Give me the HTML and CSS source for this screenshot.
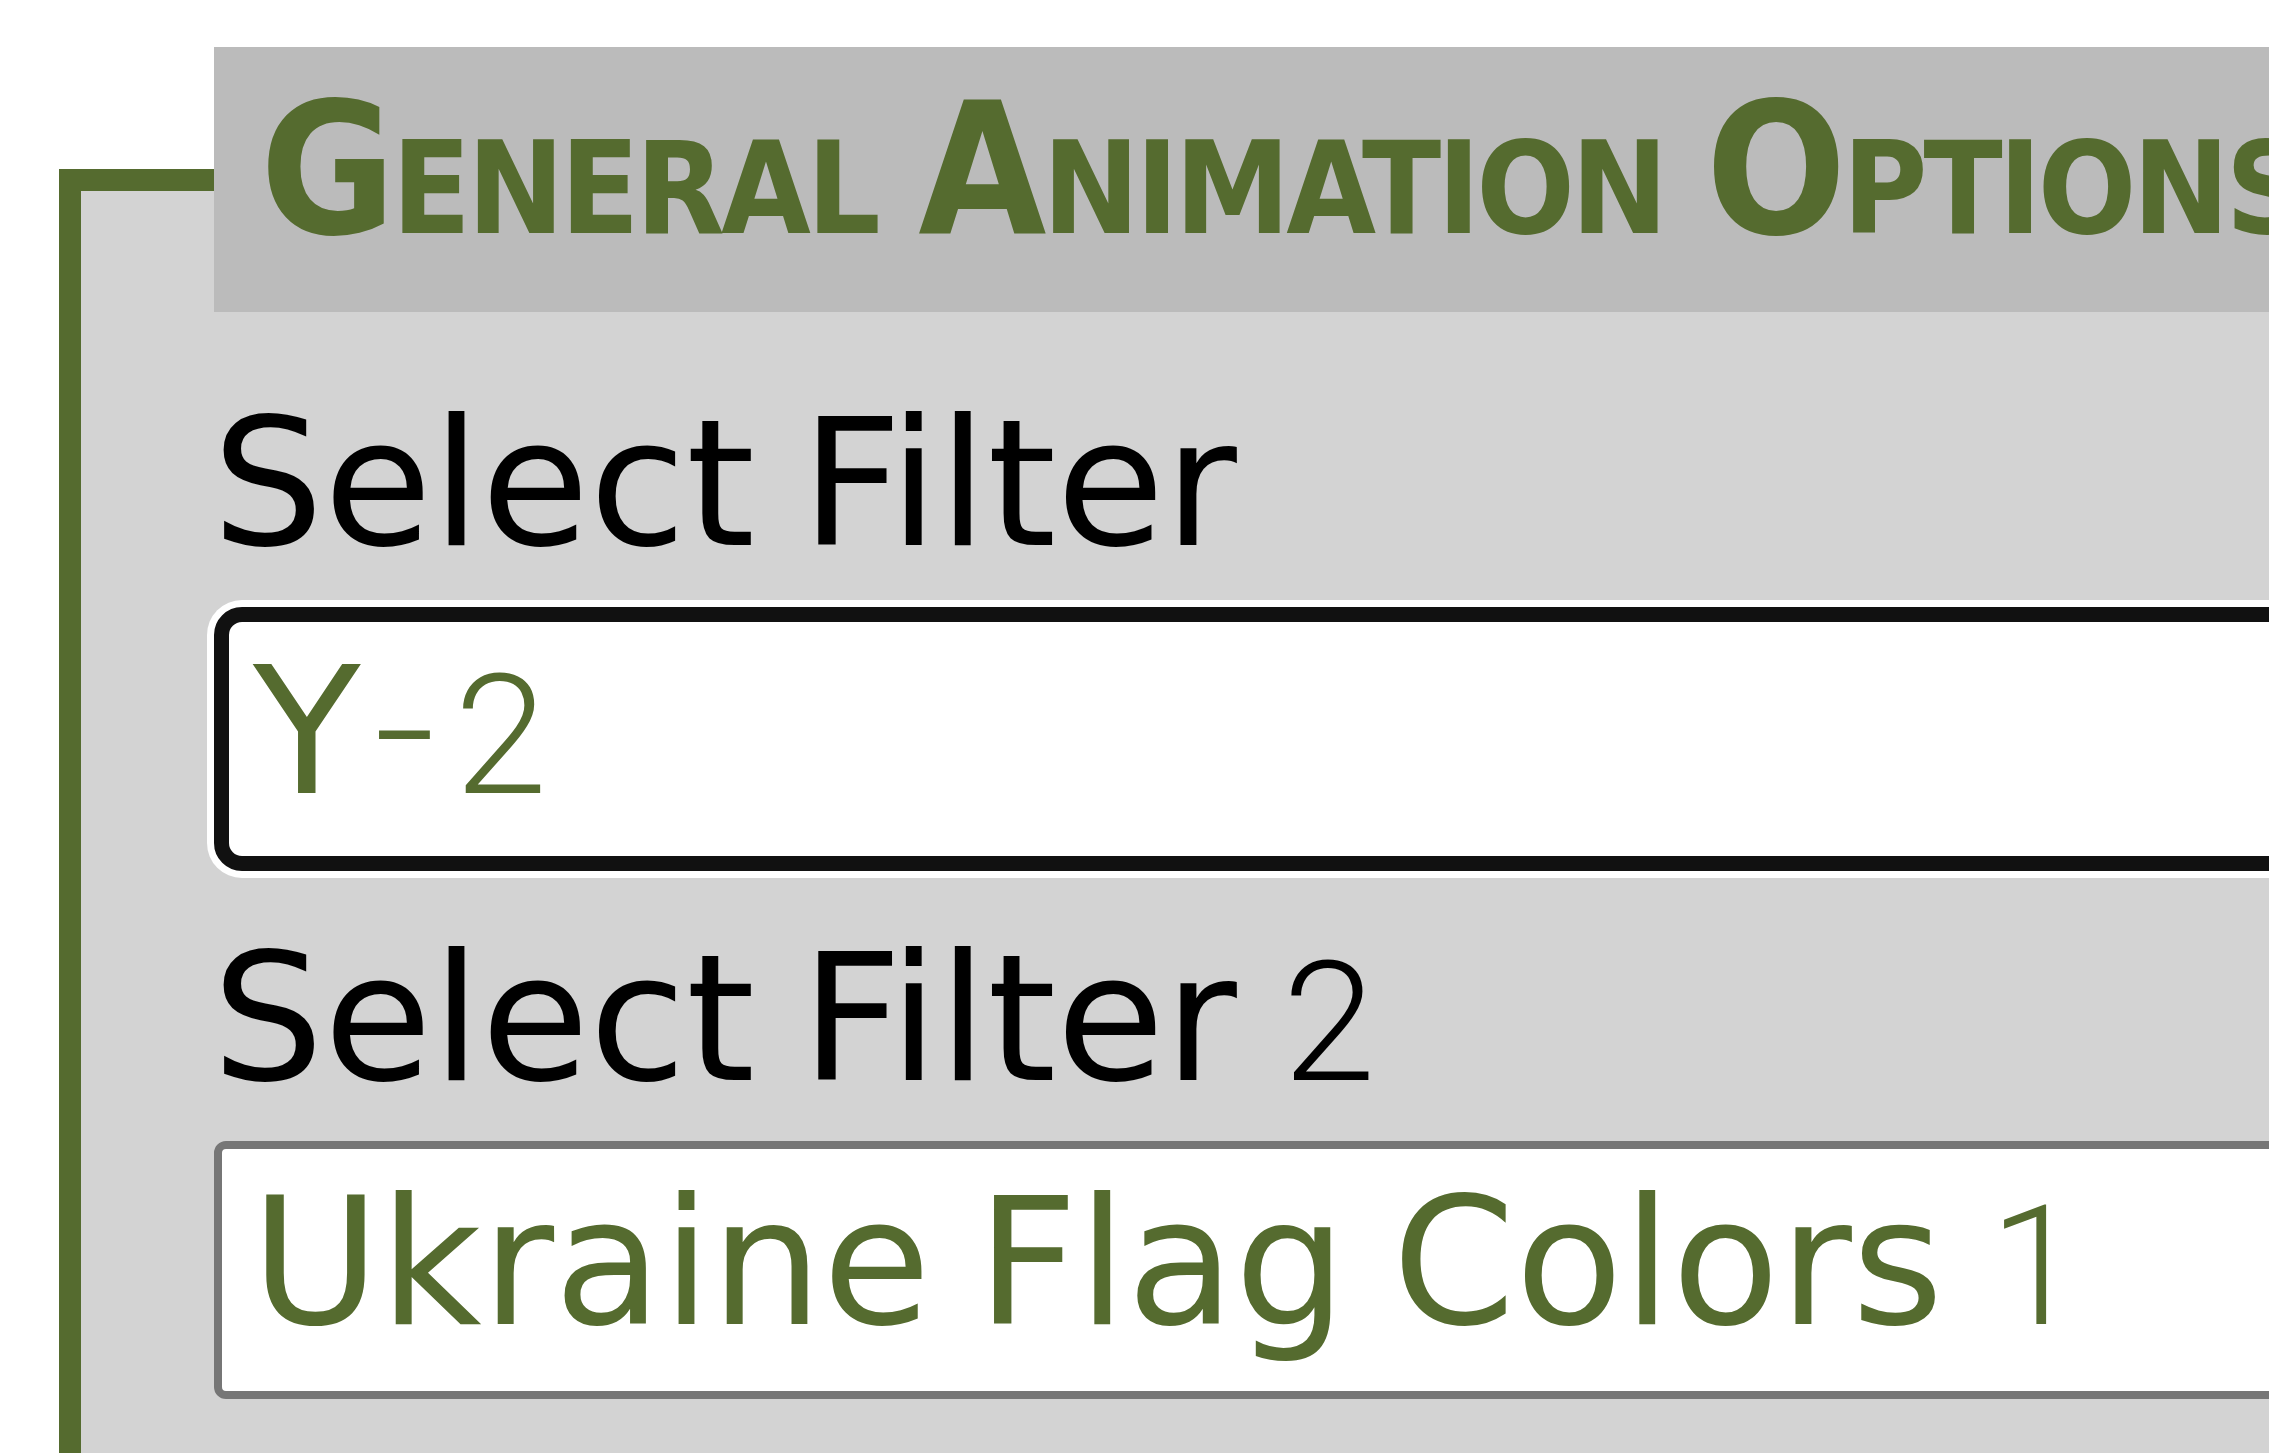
FILE: index.html
```html
<!DOCTYPE html>
<html lang="en">
<head>
<meta charset="utf-8">
<title>General Animation Options</title>
<link rel="stylesheet" href="styles.css">
</head>
<body>
<fieldset class="panel">
  <legend class="panel-title">General Animation Options</legend>
  <div class="field field-first">
    <label class="field-label">Select Filter</label>
    <div class="select select-focused">Y<span class="num num-dash">-</span><span class="num">2</span></div>
  </div>
  <div class="field field-second">
    <label class="field-label">Select Filter <span class="num">2</span></label>
    <div class="select select-plain">Ukraine Flag Colors <span class="num">1</span></div>
  </div>
</fieldset>
</body>
</html>
```

FILE: styles.css
```css
html, body {
  margin: 0;
  padding: 0;
  background: #ffffff;
  overflow: hidden;
}

body {
  font-family: "DejaVu Sans", "Liberation Sans", sans-serif;
}

.panel {
  box-sizing: border-box;
  width: 2700px;
  margin: 47px 0 0 59px;
  padding: 70px 0 300px 133px;
  border: 22px solid #556b2f;
  background: #d3d3d3;
  min-width: 0;
}

.panel-title {
  margin: 0;
  padding: 15px 46px 36px 46px;
  background: #bbbbbb;
  color: #556b2f;
  font-family: "DejaVu Sans Condensed", "DejaVu Sans", sans-serif;
  font-stretch: condensed;
  font-weight: bold;
  font-size: 184px;
  font-variant: small-caps;
  line-height: normal;
  letter-spacing: -4px;
  word-spacing: -12px;
  white-space: nowrap;
}

.field-label {
  display: block;
  margin-left: -2px;
  font-size: 176px;
  line-height: normal;
  word-spacing: -10px;
  color: #000000;
  white-space: nowrap;
}

.field-second {
  margin-top: 46px;
}

.select {
  box-sizing: border-box;
  width: 2400px;
  background: #ffffff;
  color: #556b2f;
  font-size: 176px;
  line-height: normal;
  word-spacing: -10px;
  white-space: nowrap;
}

.select-focused {
  margin-top: 20px;
  height: 264px;
  padding: 8px 0 0 24px;
  border: 15px solid #111111;
  border-radius: 28px;
  box-shadow: 0 0 0 7px #ffffff;
}

.select-plain {
  margin-top: 19px;
  height: 258px;
  padding: 12px 0 0 29px;
  border: 8px solid #767676;
  border-radius: 12px;
}

.num {
  font-family: "Roboto", "Open Sans", sans-serif;
  font-weight: 300;
  font-size: 167px;
  word-spacing: 0;
}

.num-dash {
  display: inline-block;
  margin: 0 26px 0 20px;
  transform: translateY(-6px) scaleX(1.3);
}
```
